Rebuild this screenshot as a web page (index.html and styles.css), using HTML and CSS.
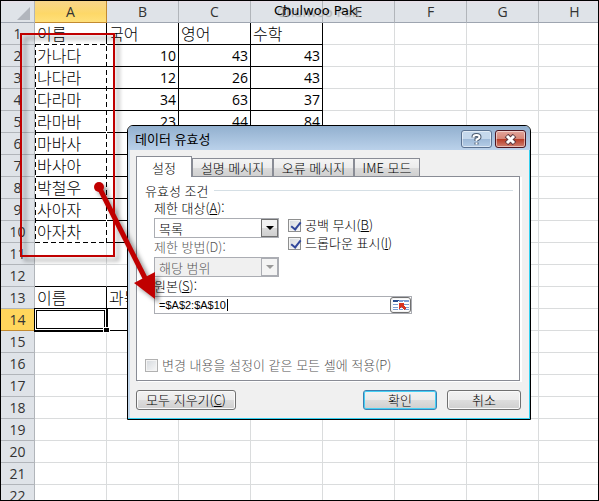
FILE: index.html
```html
<!DOCTYPE html>
<html lang="ko">
<head>
  <meta charset="UTF-8">
  <meta name="viewport" content="width=device-width, initial-scale=1.0">
  <title>데이터 유효성</title>
  <link rel="stylesheet" href="styles.css">
</head>
<body>
  <main class="sheet">
    <table class="grid">
      <colgroup>
        <col class="col-num">
        <col class="col"><col class="col"><col class="col"><col class="col">
        <col class="col"><col class="col"><col class="col"><col class="col">
      </colgroup>
      <thead>
        <tr>
          <th class="corner"><svg width="13" height="13" viewBox="0 0 13 13"><path d="M13 0V13H0Z" fill="#b2b6bd"/></svg></th>
          <th class="active">A</th><th>B</th><th>C</th><th>D</th><th>E</th><th>F</th><th>G</th><th>H</th>
        </tr>
      </thead>
      <tbody>
        <tr class="boxed"><th>1</th><td>이름</td><td>국어</td><td>영어</td><td>수학</td><td></td><td></td><td></td><td></td></tr>
        <tr class="boxed"><th>2</th><td>가나다</td><td class="num">10</td><td class="num">43</td><td class="num">43</td><td></td><td></td><td></td><td></td></tr>
        <tr class="boxed"><th>3</th><td>나다라</td><td class="num">12</td><td class="num">26</td><td class="num">43</td><td></td><td></td><td></td><td></td></tr>
        <tr class="boxed"><th>4</th><td>다라마</td><td class="num">34</td><td class="num">63</td><td class="num">37</td><td></td><td></td><td></td><td></td></tr>
        <tr class="boxed"><th>5</th><td>라마바</td><td class="num">23</td><td class="num">44</td><td class="num">84</td><td></td><td></td><td></td><td></td></tr>
        <tr class="boxed"><th>6</th><td>마바사</td><td></td><td></td><td></td><td></td><td></td><td></td><td></td></tr>
        <tr class="boxed"><th>7</th><td>바사아</td><td></td><td></td><td></td><td></td><td></td><td></td><td></td></tr>
        <tr class="boxed"><th>8</th><td>박철우</td><td></td><td></td><td></td><td></td><td></td><td></td><td></td></tr>
        <tr class="boxed"><th>9</th><td>사아자</td><td></td><td></td><td></td><td></td><td></td><td></td><td></td></tr>
        <tr class="boxed"><th>10</th><td>아자차</td><td></td><td></td><td></td><td></td><td></td><td></td><td></td></tr>
        <tr><th>11</th><td></td><td></td><td></td><td></td><td></td><td></td><td></td><td></td></tr>
        <tr class="before-box"><th>12</th><td></td><td></td><td></td><td></td><td></td><td></td><td></td><td></td></tr>
        <tr class="boxed"><th>13</th><td>이름</td><td>과목</td><td></td><td></td><td></td><td></td><td></td><td></td></tr>
        <tr class="boxed"><th class="active">14</th><td class="cursor"></td><td></td><td></td><td></td><td></td><td></td><td></td><td></td></tr>
        <tr><th>15</th><td></td><td></td><td></td><td></td><td></td><td></td><td></td><td></td></tr>
        <tr><th>16</th><td></td><td></td><td></td><td></td><td></td><td></td><td></td><td></td></tr>
        <tr><th>17</th><td></td><td></td><td></td><td></td><td></td><td></td><td></td><td></td></tr>
        <tr><th>18</th><td></td><td></td><td></td><td></td><td></td><td></td><td></td><td></td></tr>
        <tr><th>19</th><td></td><td></td><td></td><td></td><td></td><td></td><td></td><td></td></tr>
        <tr><th>20</th><td></td><td></td><td></td><td></td><td></td><td></td><td></td><td></td></tr>
        <tr><th>21</th><td></td><td></td><td></td><td></td><td></td><td></td><td></td><td></td></tr>
        <tr><th>22</th><td></td><td></td><td></td><td></td><td></td><td></td><td></td><td></td></tr>
      </tbody>
    </table>

    <!-- dashed outline round A2:A10, fill handle of A14 -->
    <svg class="overlay" width="120" height="340" viewBox="0 0 120 340" fill="none" shape-rendering="crispEdges">
      <rect x="35.5" y="44.5" width="71" height="198" stroke="#fff"/>
      <rect x="35.5" y="44.5" width="71" height="198" stroke="#000" stroke-dasharray="5 3"/>
      <rect x="103" y="327" width="7" height="6" fill="#fff"/>
      <rect x="104" y="328" width="5" height="4" fill="#000"/>
    </svg>
    <span class="watermark">Chulwoo Pak</span>
  </main>

  <section class="dialog" role="dialog" aria-labelledby="dialogTitle">
    <header class="title-bar">
      <h1 id="dialogTitle">데이터 유효성</h1>
      <button type="button" class="help" aria-label="도움말">
        <svg width="11" height="13" viewBox="0 0 11 13" fill="none">
          <path d="M2.5 4.5V4Q2.5 2 5.5 2T8.5 4Q8.5 5.5 5.500 6.500V8M5.500 9.500V11.500" stroke="#4a5a70" stroke-width="4"/>
          <path d="M2.5 4.5V4Q2.5 2 5.5 2T8.5 4Q8.5 5.5 5.500 6.500V8M5.500 9.500V11.500" stroke="#fff" stroke-width="2"/>
        </svg>
      </button>
      <button type="button" class="close" aria-label="닫기">
        <svg width="13" height="11" viewBox="0 0 13 11" fill="none">
          <path d="M2.500 1.500L10.500 9.500M10.500 1.500L2.500 9.500" stroke="#5c3a40" stroke-width="5"/>
          <path d="M3 2L10 9M10 2L3 9" stroke="#fff" stroke-width="3"/>
        </svg>
      </button>
    </header>

    <form class="dialog-body">
      <nav class="tabs">
        <button type="button" class="tab tab-on">설정</button>
        <button type="button" class="tab tab-wide">설명 메시지</button>
        <button type="button" class="tab tab-wide">오류 메시지</button>
        <button type="button" class="tab">IME 모드</button>
      </nav>

      <div class="panel">
        <h2 class="group-title">유효성 조건</h2>
        <div class="criteria">
          <div class="fields">
            <label for="allow">제한 대상(<u>A</u>):</label>
            <div class="combo">
              <select id="allow"><option>목록</option></select>
              <span class="arrow"></span>
            </div>
            <label for="method" class="off">제한 방법(D):</label>
            <div class="combo combo-off">
              <select id="method" disabled><option>해당 범위</option></select>
              <span class="arrow"></span>
            </div>
          </div>
          <div class="checks">
            <label class="check"><input type="checkbox" checked><span>공백 무시(<u>B</u>)</span></label>
            <label class="check"><input type="checkbox" checked><span>드롭다운 표시(<u>I</u>)</span></label>
          </div>
          <div class="source">
            <label for="source">원본(<u>S</u>):</label>
            <div class="range-box">
              <input type="text" id="source" value="=$A$2:$A$10">
              <button type="button" class="pick" aria-label="범위 선택">
                <svg width="16" height="12" viewBox="0 0 16 12" shape-rendering="crispEdges">
                  <rect width="16" height="12" fill="#fff"/>
                  <path d="M0 1H16V3H0ZM0 5H16V6H0ZM0 8H16V9H0ZM0 10H16V11H0Z" fill="#7d9ed2"/>
                  <path d="M0 1H6V3H0Z" fill="#274a8c"/>
                  <path d="M5 2V11M10 2V11" stroke="#fff"/>
                  <path d="M6 4H11V5L10 6L13 9L11 11L8 8L6 10Z" fill="#d8331f"/>
                </svg>
              </button>
            </div>
          </div>
        </div>
        <label class="check apply off"><input type="checkbox" disabled><span>변경 내용을 설정이 같은 모든 셀에 적용(P)</span></label>
      </div>

      <div class="actions">
        <button type="button" class="btn btn-clear">모두 지우기(<u>C</u>)</button>
        <button type="submit" class="btn btn-ok">확인</button>
        <button type="button" class="btn">취소</button>
      </div>
    </form>
  </section>

  <!-- red box and arrow pointing at the source field -->
  <svg class="overlay marks" width="180" height="320" viewBox="0 0 180 320" fill="none">
    <rect x="21" y="34" width="93" height="222" stroke="#c00000" stroke-width="2"/>
    <g class="pointer">
      <circle cx="99" cy="187" r="5" fill="#c00000"/>
      <path d="M99 187L146 280" stroke="#c00000" stroke-width="5"/>
      <path d="M134 283L155 272L155 299Z" fill="#c00000"/>
    </g>
  </svg>
</body>
</html>
```

FILE: styles.css
```css
* {
  box-sizing: border-box;
}

body {
  margin: 0;
  position: relative;
  overflow: hidden;
  font-family: "Noto Sans CJK KR", sans-serif;
  color: #000;
}

/* worksheet */
.sheet {
  position: relative;
  height: 100vh;
  overflow: hidden;
  border: 1px solid #000;
  background: #fff;
}

.grid {
  width: 610px;
  table-layout: fixed;
  border-collapse: separate;
  border-spacing: 0;
  font-size: 16px;
  font-weight: 300;
  line-height: 21px;
}

.col-num {
  width: 34px;
}

.col {
  width: 72px;
}

.grid th,
.grid td {
  height: 22px;
  padding: 0 2px;
  border-right: 1px solid #dadcdd;
  border-bottom: 1px solid #dadcdd;
  white-space: nowrap;
}

.grid th {
  padding: 0;
  background: #dfe3e8;
  border-color: #b1b5ba;
  color: #333;
  font: 14px/21px "Open Sans", "Noto Sans", sans-serif;
  text-align: center;
}

.grid thead th {
  border-bottom-color: #9ea5b0;
  background: linear-gradient(#e8dfe8, #dfe3e8 3px);
}

.grid .corner {
  line-height: 0;
  text-align: right;
  padding: 3px 4px 0 0;
}

.grid thead .active {
  background: linear-gradient(#f8d58a, #fdd868 60%, #ffe07a);
  border-color: #c28a30;
}

.grid tbody .active {
  background: #ffd65c;
  border-color: #c28a30;
}

.grid .num {
  font: 14px/21px "Open Sans", "Noto Sans", sans-serif;
  text-align: right;
}

.boxed td:nth-child(-n+5) {
  border-color: #000;
}

.before-box td:nth-child(-n+5) {
  border-bottom-color: #000;
}

.grid .cursor {
  outline: 1px solid #000;
  box-shadow: inset 0 0 0 1px #fff, inset 0 0 0 2px #000;
}

.overlay {
  position: absolute;
  top: -1px;
  left: -1px;
  pointer-events: none;
}

.watermark {
  position: absolute;
  top: 1px;
  left: 273px;
  font: 13px/18px "DejaVu Sans", sans-serif;
  text-shadow: 3px 2px 1px #aaa;
}

/* dialog */
.dialog {
  position: absolute;
  top: 125px;
  left: 127px;
  width: 404px;
  border: 1px solid #000;
  border-radius: 6px 6px 0 0;
  background: #f0f0f0;
  box-shadow: inset -1px -1px 0 #35d0f0, inset 2px 0 0 #c4d8ec;
  font-size: 13px;
  font-weight: 300;
}

.dialog button,
.dialog input,
.dialog select {
  font: inherit;
  color: inherit;
}

.title-bar {
  display: flex;
  gap: 3px;
  height: 24px;
  padding: 4px 4px 0 7px;
  border-radius: 5px 5px 0 0;
  background: linear-gradient(#92b0cf, #bad1ea);
}

.title-bar h1 {
  flex: 1;
  margin: 0;
  font-size: 13px;
  line-height: 17px;
  font-weight: normal;
}

.title-bar button {
  display: flex;
  align-items: center;
  justify-content: center;
  width: 31px;
  height: 18px;
  padding: 0;
  border: 1px solid #5a7190;
  border-radius: 3px;
  background: linear-gradient(#c5d8ec 50%, #9db9d8 50%, #b4cce6);
  box-shadow: inset 0 0 0 1px rgba(255, 255, 255, 0.5);
}

.title-bar .close {
  border-color: #4b1520;
  background: linear-gradient(#e3a59b, #d58576 50%, #b83a24 50%, #d08070);
}

.dialog-body {
  padding: 6px 9px 9px 8px;
}

.tabs {
  display: flex;
  align-items: flex-end;
  height: 20px;
}

.tab {
  height: 18px;
  width: 66px;
  padding: 0;
  border: 1px solid #898c95;
  border-bottom: 0;
  background: linear-gradient(#f4f4f4, #ececec 50%, #dcdcdc 50%, #d0d0d0);
}

.dialog .tab {
  line-height: 17px;
}

.tab-wide {
  width: 81px;
}

.tab-on {
  position: relative;
  width: 56px;
  height: 21px;
  margin-bottom: -1px;
  background: #fff;
}

.panel {
  margin-right: 1px;
  padding: 5px 6px 6px 8px;
  border: 1px solid #898c95;
  background: #fff;
  box-shadow: 2px 1px 0 #fff;
}

.group-title {
  display: flex;
  align-items: center;
  gap: 6px;
  margin: 0;
  font-size: 13px;
  font-weight: 300;
  line-height: 17px;
}

.group-title::after {
  content: "";
  flex: 1;
  height: 1px;
  background: #d5dfe5;
}

.criteria {
  display: grid;
  grid-template-columns: 125px 1fr;
  column-gap: 9px;
  padding-left: 9px;
}

.fields label,
.source label {
  display: block;
  height: 19px;
  line-height: 17px;
}

.off {
  color: #555;
}

.combo {
  display: flex;
  height: 20px;
  border: 1px solid #abadb3;
  background: #fff;
}

.combo select {
  flex: 1;
  min-width: 0;
  padding: 0 0 0 4px;
  border: 0;
  background: none;
  appearance: none;
}

.combo .arrow {
  display: flex;
  align-items: center;
  justify-content: center;
  width: 17px;
  border: 1px solid #707070;
  background: linear-gradient(#f2f2f2 50%, #dcdcdc 50%, #cfcfcf);
}

.arrow::before {
  content: "";
  border: 4px solid transparent;
  border-top-color: #000;
  border-bottom: 0;
}

.combo-off {
  background: #f0f0f0;
  color: #555;
}

.combo-off select {
  opacity: 1;
}

.combo-off .arrow {
  border-color: #abadb3;
  background: #f4f4f4;
}

.combo-off .arrow::before {
  border-top-color: #999;
}

.checks {
  padding-top: 17px;
}

.check {
  display: flex;
  align-items: center;
  gap: 4px;
  height: 18px;
  line-height: 18px;
}

.check input {
  appearance: none;
  width: 13px;
  height: 13px;
  margin: 0;
  border: 1px solid #8e8f8f;
  background: linear-gradient(135deg, #d4d8dd, #f8f8f8);
  box-shadow: inset 0 0 0 1px #f4f4f4;
}

.check input:checked::before {
  content: "";
  display: block;
  width: 4px;
  height: 8px;
  margin: 0 0 0 4px;
  border: solid #31479b;
  border-width: 0 2px 2px 0;
  transform: rotate(38deg);
}

.check input:disabled {
  border-color: #b1b1b1;
}

.source {
  grid-column: 1 / -1;
}

.range-box {
  display: flex;
  width: 258px;
  height: 18px;
  border: 1px solid #abadb3;
}

/* the gradient is the text caret */
.range-box input {
  flex: 1;
  min-width: 0;
  padding: 0 0 0 4px;
  border: 0;
  outline: 0;
  background: linear-gradient(#000, #000) 72px 2px / 1px 12px no-repeat #fff;
}

.dialog .range-box input {
  font: 11px "Liberation Sans", Arial, sans-serif;
}

.pick {
  display: flex;
  align-items: center;
  justify-content: center;
  width: 21px;
  padding: 0;
  border: 1px solid #707070;
  border-radius: 3px;
  background: #f4f4f4;
}

.apply {
  margin-top: 42px;
}

.actions {
  display: flex;
  gap: 10px;
  margin-top: 9px;
}

.btn {
  width: 74px;
  height: 20px;
  padding: 0;
  border: 1px solid #707070;
  border-radius: 3px;
  background: linear-gradient(#f2f2f2, #ebebeb 50%, #dddddd 50%, #cfcfcf);
  box-shadow: inset 0 0 0 1px #fafafa;
}

.dialog .btn {
  line-height: 18px;
}

.btn-clear {
  width: 100px;
  margin-right: auto;
}

.btn-ok {
  border-color: #3c7fb1;
  box-shadow: inset 0 0 0 1px #45d0f5;
}

.marks {
  top: 0;
  left: 0;
  filter: drop-shadow(4px 4px 2px rgba(0, 0, 0, 0.4));
}
```
